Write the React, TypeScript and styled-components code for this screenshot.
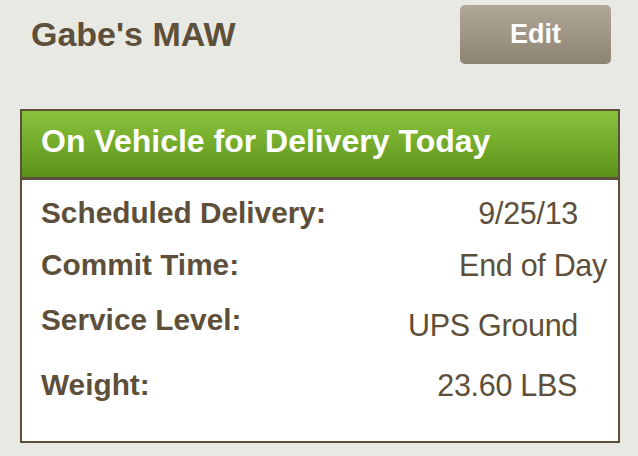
import React from "react";
import styled, { createGlobalStyle } from "styled-components";

const Global = createGlobalStyle`
  html, body { margin: 0; padding: 0; background: #e9e9e4; }
  body { font-family: "Liberation Sans", Arial, Helvetica, sans-serif; }
`;

const Page = styled.div`
  width: 638px;
  height: 456px;
  background: #e9e9e4;
  overflow: hidden;
`;

const TopBar = styled.div`
  display: flex;
  align-items: center;
  justify-content: space-between;
  padding: 5px 27px 0 31px;
`;

const Title = styled.h1`
  margin: 0;
  font-size: 34px;
  font-weight: 700;
  color: #5d4f3a;
`;

const EditButton = styled.button`
  width: 151px;
  height: 59px;
  border: none;
  border-radius: 5px;
  background: linear-gradient(to bottom, #b1a797 0%, #8e8472 100%);
  color: #ffffff;
  font-family: "Liberation Sans", Arial, sans-serif;
  font-size: 27px;
  font-weight: 700;
  padding: 0;
  cursor: pointer;
`;

const Card = styled.section`
  margin: 45px 0 0 20px;
  width: 600px;
  box-sizing: border-box;
  border: 2px solid #5b4f3b;
  background: #ffffff;
`;

const CardHeader = styled.div`
  height: 60px;
  display: flex;
  align-items: center;
  padding: 0 0 6px 19px;
  background: linear-gradient(to bottom, #89c33d 0%, #74ab2c 50%, #5a9118 100%);
  border-bottom: 3px solid #5b4f3b;
`;

const HeaderText = styled.h2`
  margin: 0;
  font-size: 32px;
  font-weight: 700;
  color: #ffffff;
`;

const CardBody = styled.div`
  padding: 7px 0 20px 19px;
  display: flex;
  flex-direction: column;
`;

const Row = styled.div<{ $h: number; $inset: number }>`
  height: ${(p) => p.$h}px;
  display: flex;
  align-items: center;
  justify-content: space-between;
  padding-right: ${(p) => p.$inset}px;
`;

const Label = styled.span`
  font-size: 29.8px;
  font-weight: 700;
  color: #5d4f3a;
`;

const Value = styled.span<{ $drop: number }>`
  font-size: 30.5px;
  font-weight: 400;
  color: #5d4f3a;
  letter-spacing: -0.3px;
  margin-top: ${(p) => p.$drop * 2}px;
`;

const rows = [
  { label: "Scheduled Delivery:", value: "9/25/13", h: 52, inset: 40, drop: 0 },
  { label: "Commit Time:", value: "End of Day", h: 52, inset: 11, drop: 0 },
  { label: "Service Level:", value: "UPS Ground", h: 58, inset: 40, drop: 5 },
  { label: "Weight:", value: "23.60 LBS", h: 72, inset: 41, drop: 0 },
];

export default function App() {
  return (
    <Page>
      <Global />
      <TopBar>
        <Title>Gabe's MAW</Title>
        <EditButton>Edit</EditButton>
      </TopBar>
      <Card>
        <CardHeader>
          <HeaderText>On Vehicle for Delivery Today</HeaderText>
        </CardHeader>
        <CardBody>
          {rows.map((r) => (
            <Row key={r.label} $h={r.h} $inset={r.inset}>
              <Label>{r.label}</Label>
              <Value $drop={r.drop}>{r.value}</Value>
            </Row>
          ))}
        </CardBody>
      </Card>
    </Page>
  );
}
